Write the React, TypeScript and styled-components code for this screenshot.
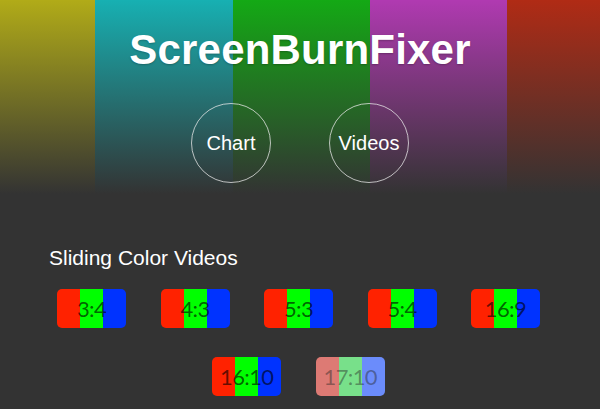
import styled, { createGlobalStyle } from "styled-components";

const GlobalStyle = createGlobalStyle`
  html, body {
    margin: 0;
    padding: 0;
    background: #333333;
  }
  body {
    font-family: "Liberation Sans", Arial, sans-serif;
    color: #ffffff;
  }
`;

const Page = styled.div`
  width: 600px;
  min-height: 409px;
  background: #333333;
`;

const Hero = styled.header`
  height: 200px;
  display: flex;
  flex-direction: column;
  align-items: center;
  box-sizing: border-box;
  padding-top: 26px;
  background:
    linear-gradient(to bottom, rgba(51, 51, 51, 0) 0%, #333333 97%),
    linear-gradient(
      to right,
      #b1ab18 0 95px,
      #17b0b2 95px 233px,
      #14a915 233px 370px,
      #b03ab1 370px 507px,
      #b02b15 507px 600px
    );
`;

const Title = styled.h1`
  margin: 0;
  font-size: 42px;
  font-weight: bold;
  line-height: 48px;
  letter-spacing: 0.2px;
  text-shadow: 0 1px 2px rgba(0, 0, 0, 0.25);
`;

const Nav = styled.nav`
  display: flex;
  gap: 58px;
  margin-top: 29px;
`;

const RoundLink = styled.a`
  width: 80px;
  height: 80px;
  box-sizing: border-box;
  border: 1.5px solid rgba(235, 235, 235, 0.75);
  border-radius: 50%;
  display: flex;
  align-items: center;
  justify-content: center;
  font-size: 20px;
  color: #ffffff;
  text-decoration: none;
`;

const Section = styled.section`
  padding: 46px 0 0 49px;
`;

const SectionTitle = styled.h2`
  margin: 0;
  font-size: 21px;
  font-weight: normal;
  line-height: 24px;
`;

const VideoList = styled.div`
  width: 503px;
  margin: 19px 0 0 -2px;
  display: flex;
  flex-wrap: wrap;
  justify-content: center;
  column-gap: 34.5px;
  row-gap: 29px;
`;

const VideoButton = styled.a<{ $dim?: boolean }>`
  width: 69px;
  height: 39px;
  border-radius: 5px;
  overflow: hidden;
  display: flex;
  align-items: center;
  justify-content: center;
  background: ${(p) =>
    p.$dim
      ? "linear-gradient(to right, #dd7a74 0 33.3%, #78e08a 33.3% 66.6%, #6b8cfb 66.6% 100%)"
      : "linear-gradient(to right, #ff2200 0 33.3%, #00ff00 33.3% 66.6%, #0033ff 66.6% 100%)"};
  text-decoration: none;
`;

const Ratio = styled.span<{ $dim?: boolean }>`
  font-family: "Lato", "DejaVu Sans", sans-serif;
  font-weight: 400;
  font-size: 22px;
  letter-spacing: -0.6px;
  color: ${(p) => (p.$dim ? "rgba(40, 40, 40, 0.45)" : "rgba(0, 0, 0, 0.62)")};
`;

const ratios = ["3:4", "4:3", "5:3", "5:4", "16:9", "16:10", "17:10"];

export default function App() {
  return (
    <Page>
      <GlobalStyle />
      <Hero>
        <Title>ScreenBurnFixer</Title>
        <Nav>
          <RoundLink href="#">Chart</RoundLink>
          <RoundLink href="#">Videos</RoundLink>
        </Nav>
      </Hero>
      <Section>
        <SectionTitle>Sliding Color Videos</SectionTitle>
        <VideoList>
          {ratios.map((r) => (
            <VideoButton key={r} href="#" $dim={r === "17:10"}>
              <Ratio $dim={r === "17:10"}>{r}</Ratio>
            </VideoButton>
          ))}
        </VideoList>
      </Section>
    </Page>
  );
}
